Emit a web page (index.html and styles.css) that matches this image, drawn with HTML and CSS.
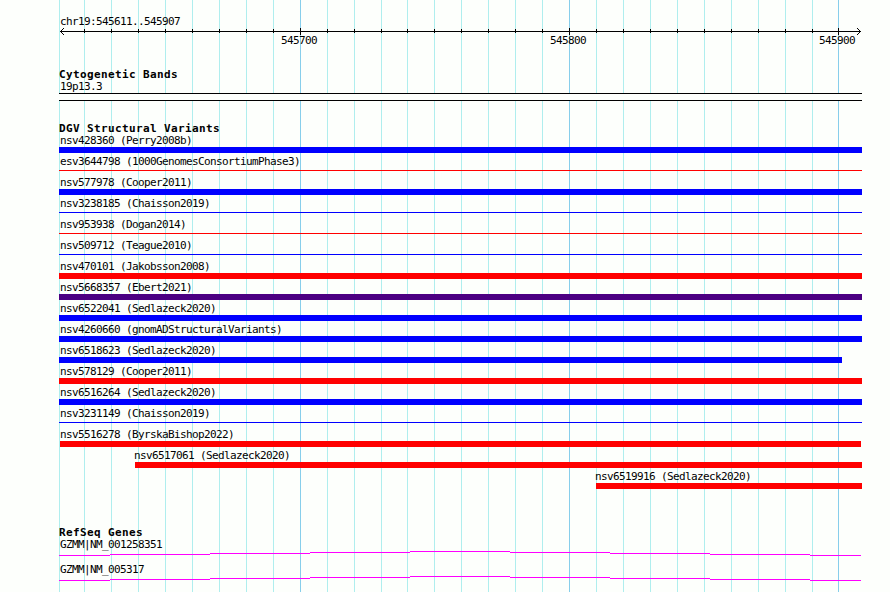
FILE: index.html
```
<!DOCTYPE html>
<html lang="en">
<head>
    <meta charset="UTF-8">
    <meta name="viewport" content="width=device-width, initial-scale=1.0">
    <title>chr19:545611..545907</title>
    <link rel="stylesheet" href="styles.css">
</head>
<body>
    <main class="browser">
        <svg class="grid" id="grid" width="890" height="592" shape-rendering="crispEdges"></svg>

        <section class="scale">
            <div class="label">chr19:545611..545907</div>
            <svg class="axis" id="axis" width="803" height="9" shape-rendering="crispEdges">
                <path d="M1 4.5H802" stroke="#000" fill="none"/>
                <path d="M1 4h1v1h-1zM2 3h1v3h-1zM3 2h1v1h-1zM3 6h1v1h-1zM4 1h1v1h-1zM4 7h1v1h-1z"/>
                <path d="M801 4h1v1h-1zM800 3h1v3h-1zM799 2h1v1h-1zM799 6h1v1h-1zM798 1h1v1h-1zM798 7h1v1h-1z"/>
            </svg>
            <div class="numbers">
                <span>545700</span>
                <span>545800</span>
                <span>545900</span>
            </div>
        </section>

        <section class="track cyto">
            <h2>Cytogenetic Bands</h2>
            <div class="label">19p13.3</div>
            <div class="band"></div>
        </section>

        <section class="track variants">
            <h2>DGV Structural Variants</h2>
            <div id="variants"></div>
        </section>

        <section class="track genes">
            <h2>RefSeq Genes</h2>
            <div class="gene">
                <div class="label">GZMM|NM_001258351</div>
                <svg class="intron" width="803" height="6" shape-rendering="crispEdges">
                    <path d="M0 4.5H51M51 3.5H151M151 2.5H251M251 1.5H351M351 .5H451M451 1.5H551M551 2.5H651M651 3.5H751M751 4.5H802"/>
                </svg>
            </div>
            <div class="gene">
                <div class="label">GZMM|NM_005317</div>
                <svg class="intron" width="803" height="6" shape-rendering="crispEdges">
                    <path d="M0 4.5H51M51 3.5H151M151 2.5H251M251 1.5H351M351 .5H451M451 1.5H551M551 2.5H651M651 3.5H751M751 4.5H802"/>
                </svg>
            </div>
        </section>
    </main>

    <script src="tracks.js"></script>
</body>
</html>
```
FILE: styles.css
```
body {
    margin: 0;
    background: #fdfffc;
    color: #000;
    font-family: "DejaVu Sans Mono", "Liberation Mono", monospace;
    font-size: 11px;
    line-height: 12px;
}

.browser {
    box-sizing: border-box;
    position: relative;
    width: 890px;
    height: 592px;
    padding: 15px 28px 0 59px;
    overflow: hidden;
}

/* grid lines run behind every track */
.grid {
    position: absolute;
    top: 0;
    left: 0;
}

.scale,
.track {
    position: relative;
}

.label {
    height: 12px;
    padding: 1px 0 0 1px;
    letter-spacing: -0.622px;
    white-space: pre;
}

.scale {
    height: 53px;
}

.axis {
    display: block;
    margin-top: -1px;
}

.numbers {
    display: flex;
    gap: 233px;
    margin-top: -1px;
    padding-left: 222px;
    letter-spacing: -0.622px;
}

.numbers span {
    width: 36px;
}

.track h2 {
    height: 12px;
    margin: 0;
    font-size: 11px;
    line-height: 14px;
    font-weight: bold;
    letter-spacing: 0.378px;
    white-space: pre;
}

.cyto {
    height: 54px;
}

.band {
    box-sizing: border-box;
    height: 8px;
    border-top: 1px solid #000;
    border-bottom: 1px solid #000;
    background: #fdfffc;
}

.variants {
    height: 404px;
}

.variant {
    height: 21px;
}

.bar {
    height: 6px;
}

.bar.thin {
    height: 1px;
    margin-top: 2px;
}

.gain {
    background: #00f;
}

.loss {
    background: #f00;
}

.complex {
    background: #4b0082;
}

.gene {
    height: 25px;
}

.intron {
    display: block;
    fill: none;
    stroke: #f0f;
}
```
FILE: tracks.js
```
const LEFT = 59;
const RIGHT = 862;

const gridLines = [59, 84, 111, 138, 165, 192, 219, 246, 273, 300, 327, 354, 381, 407, 434,
    461, 488, 515, 542, 569, 596, 623, 650, 677, 704, 731, 758, 785, 812, 838];
const majorLines = [300, 569, 838];

// name, type, thin, start, end
const variants = [
    ['nsv428360 (Perry2008b)', 'gain'],
    ['esv3644798 (1000GenomesConsortiumPhase3)', 'loss', true],
    ['nsv577978 (Cooper2011)', 'gain'],
    ['nsv3238185 (Chaisson2019)', 'gain', true],
    ['nsv953938 (Dogan2014)', 'loss', true],
    ['nsv509712 (Teague2010)', 'gain', true],
    ['nsv470101 (Jakobsson2008)', 'loss'],
    ['nsv5668357 (Ebert2021)', 'complex'],
    ['nsv6522041 (Sedlazeck2020)', 'gain'],
    ['nsv4260660 (gnomADStructuralVariants)', 'gain'],
    ['nsv6518623 (Sedlazeck2020)', 'gain', false, 59, 842],
    ['nsv578129 (Cooper2011)', 'loss'],
    ['nsv6516264 (Sedlazeck2020)', 'gain'],
    ['nsv3231149 (Chaisson2019)', 'gain', true],
    ['nsv5516278 (ByrskaBishop2022)', 'loss', false, 60, 861],
    ['nsv6517061 (Sedlazeck2020)', 'loss', false, 135, 862],
    ['nsv6519916 (Sedlazeck2020)', 'loss', false, 596, 862]
];

function addRect(svg, x, y, height, fill) {
    const rect = document.createElementNS('http://www.w3.org/2000/svg', 'rect');
    rect.setAttribute('x', x);
    rect.setAttribute('y', y);
    rect.setAttribute('width', 1);
    rect.setAttribute('height', height);
    rect.setAttribute('fill', fill);
    svg.appendChild(rect);
}

const grid = document.getElementById('grid');
const axis = document.getElementById('axis');

gridLines.forEach(x => {
    const major = majorLines.includes(x);
    addRect(grid, x, 0, 592, major ? '#87ceeb' : '#afeeee');
    if (x !== LEFT) {
        addRect(axis, x - LEFT, major ? 1 : 2, major ? 7 : 4, '#000');
    }
});

const list = document.getElementById('variants');

variants.forEach(([name, type, thin, start = LEFT, end = RIGHT]) => {
    const row = document.createElement('div');
    row.className = 'variant';

    const label = document.createElement('div');
    label.className = 'label';
    label.textContent = name;
    // rows that start at the left edge keep the default label inset
    if (start > 60) {
        label.style.marginLeft = (start - LEFT - 2) + 'px';
    }

    const bar = document.createElement('div');
    bar.className = 'bar ' + type + (thin ? ' thin' : '');
    bar.style.marginLeft = (start - LEFT) + 'px';
    bar.style.width = (end - start) + 'px';

    row.append(label, bar);
    list.appendChild(row);
});
```
